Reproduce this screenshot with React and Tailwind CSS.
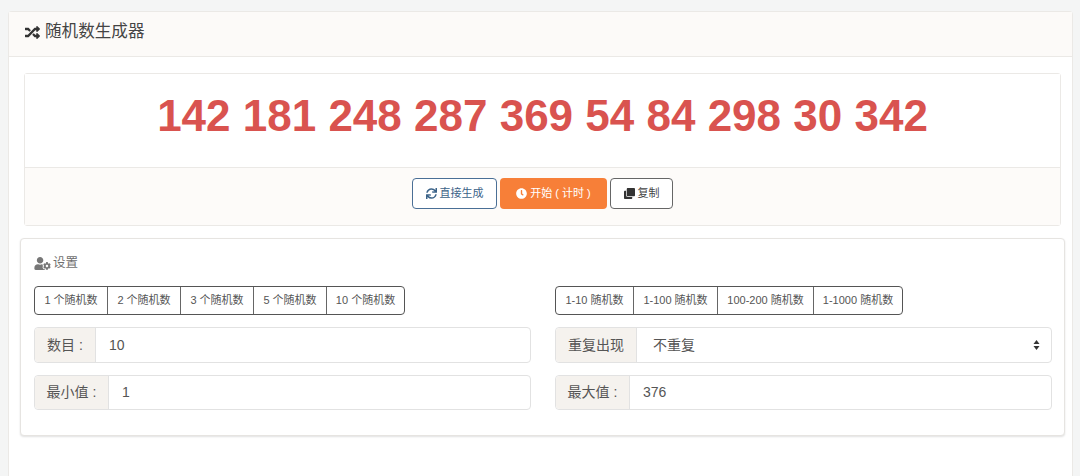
import { FaRandom, FaSync, FaClock, FaClone, FaUserCog } from 'react-icons/fa';

const countBtns = [
  ['1 个随机数', 'w-[72px]'],
  ['2 个随机数', 'w-[73px]'],
  ['3 个随机数', 'w-[73px]'],
  ['5 个随机数', 'w-[73px]'],
  ['10 个随机数', 'w-[78px]'],
];
const rangeBtns = [
  ['1-10 随机数', 'w-[77px]'],
  ['1-100 随机数', 'w-[84px]'],
  ['100-200 随机数', 'w-[96px]'],
  ['1-1000 随机数', 'w-[89px]'],
];

function BtnGroup({ items }) {
  return (
    <div className="flex h-[29px] w-fit rounded border border-[#555] bg-white">
      {items.map(([label, w], i) => (
        <button
          key={label}
          className={`${w} ${i > 0 ? 'border-l border-[#666]' : ''} whitespace-nowrap text-center text-[11px] leading-[27px] text-[#555]`}
        >
          {label}
        </button>
      ))}
    </div>
  );
}

function Field({ label, value, labelW, h = 'h-[35px]', children }) {
  return (
    <div className={`flex ${h} rounded border border-[#e2e2e2] bg-white`}>
      <div className={`${labelW} flex shrink-0 items-center justify-center whitespace-pre rounded-l border-r border-[#e2e2e2] bg-[#f5f2ee] text-[14px] text-[#555]`}>
        {label}
      </div>
      <div className="flex flex-1 items-center justify-between pl-[13px] pr-[11px] text-[14px] text-[#555]">
        {value}
        {children}
      </div>
    </div>
  );
}

export default function App() {
  return (
    <div className="h-[476px] overflow-hidden bg-[#f4f5f5] pt-[11px] pl-2 pr-[7px] font-['Liberation_Sans','Noto_Sans_CJK_SC',sans-serif]">
      <div className="h-[465px] rounded-t border border-b-0 border-[#ebe9e6] bg-white">
        <div className="flex h-[45px] items-center gap-[4px] border-b border-[#ebe9e6] bg-[#fcfaf8] pb-[3px] pl-[15px] text-[16.6px] text-[#444]">
          <FaRandom className="h-[15px] w-[17px] text-[#333]" />
          随机数生成器
        </div>

        <div className="pl-[15px] pr-[11px] pt-4">
          <div className="rounded-[3px] border border-[#ebe9e6]">
            <div className="flex h-[94px] items-center justify-center border-b border-[#ebe9e6] bg-white pb-[10px] text-[44px] font-bold text-[#d9534f]">
              142 181 248 287 369 54 84 298 30 342
            </div>
            <div className="flex h-[57px] items-center justify-center gap-[3px] bg-[#fdfbf9] pb-[7px] text-[11px]">
              <button className="flex h-[31px] w-[85px] items-center justify-center gap-[3px] rounded border border-[#4a6f96] bg-white text-[#3a6288]">
                <FaSync className="h-[11px] w-[11px]" />
                直接生成
              </button>
              <button className="flex h-[31px] w-[107px] items-center justify-center gap-[3px] rounded bg-[#f77f38] text-white">
                <FaClock className="h-[11px] w-[11px]" />
                开始 ( 计时 )
              </button>
              <button className="flex h-[31px] w-[63px] items-center justify-center gap-[3px] rounded border border-[#666] bg-white text-[#444]">
                <FaClone className="h-[11px] w-[11px] text-[#333]" />
                复制
              </button>
            </div>
          </div>

          <div className="-mx-1 mt-3 h-[198px] rounded border border-[#e6e4e1] bg-white px-[13px] pt-[16px] shadow-[0_1px_2px_rgba(0,0,0,0.12)]">
            <div className="flex items-center gap-[2px] text-[12.5px] leading-[17px] text-[#6f6f6f]">
              <FaUserCog className="h-[13px] w-[17px] text-[#777]" />
              设置
            </div>
            <div className="mt-[14px] grid grid-cols-[497px_497px] gap-x-6">
              <div className="flex flex-col">
                <BtnGroup items={countBtns} />
                <div className="mt-3 flex flex-col gap-3">
                  <Field label="数目 :" value="10" labelW="w-[61px]" h="h-[36px]" />
                  <Field label="最小值 :" value="1" labelW="w-[74px]" />
                </div>
              </div>
              <div className="flex flex-col">
                <BtnGroup items={rangeBtns} />
                <div className="mt-3 flex flex-col gap-3">
                  <Field label="重复出现" value={<span className="pl-[3px]">不重复</span>} labelW="w-[81px]" h="h-[36px]">
                    <svg width="7" height="10" viewBox="0 0 7 10" className="text-[#333]">
                      <path d="M3.5 0 L6.5 4 L0.5 4 Z M3.5 10 L0.5 6 L6.5 6 Z" fill="currentColor" />
                    </svg>
                  </Field>
                  <Field label="最大值 :" value="376" labelW="w-[74px]" />
                </div>
              </div>
            </div>
          </div>
        </div>
      </div>
    </div>
  );
}
